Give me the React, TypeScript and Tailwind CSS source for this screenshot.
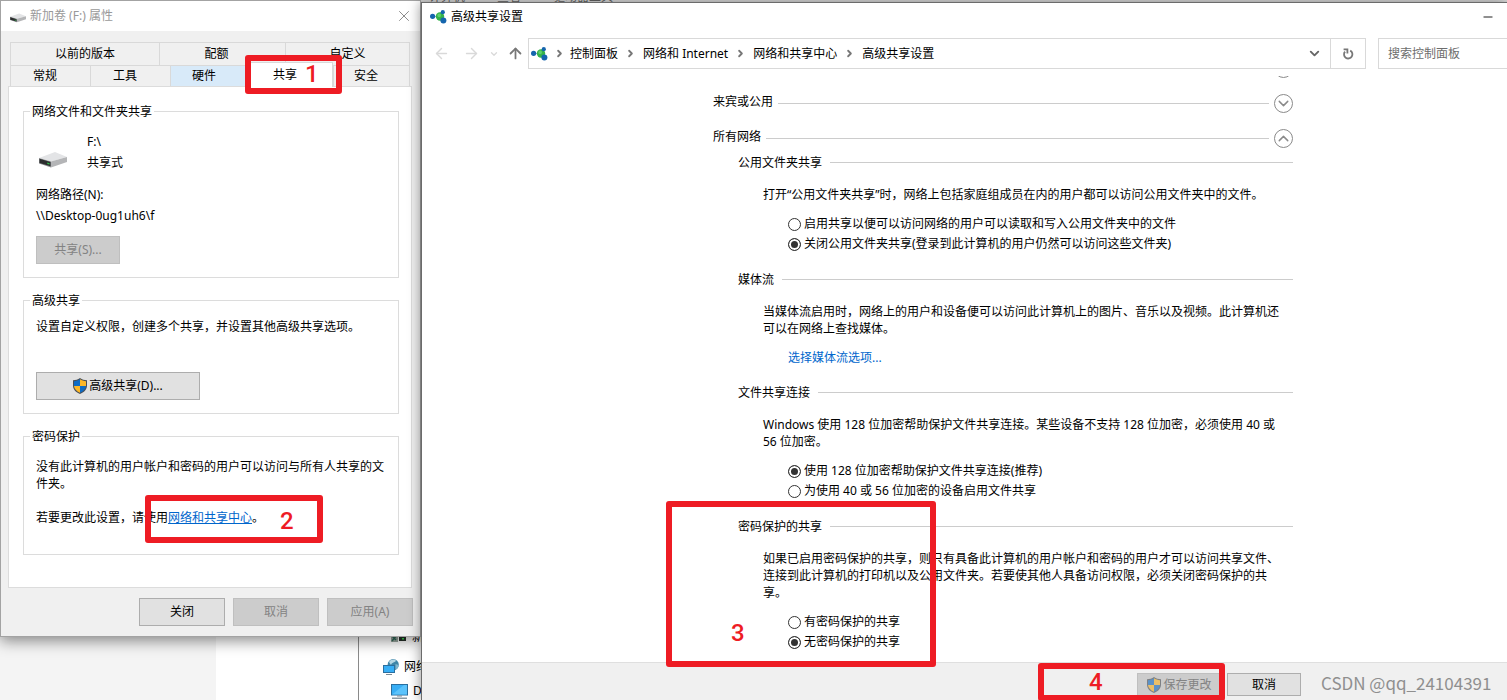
import React from 'react';
import { ArrowLeft, ArrowRight, ArrowUp, ChevronDown, ChevronRight, ChevronUp, Minus, X } from 'lucide-react';

const DriveIcon = ({ className }: { className: string }) => (
  <svg viewBox="0 0 28 16" className={className} aria-hidden="true">
    <path d="M0 6 L16 0 L28 5 L12 9.5 Z" fill="#e3e4e6" />
    <path d="M12 9.5 L28 5 V10 L12 15.5 Z" fill="#b4b5b7" />
    <path d="M0 6 L12 9.5 V15.5 L0 11.5 Z" fill="#8d8f91" />
    <path d="M0.5 6.8 L11.5 10 V14.2 L0.5 11 Z" fill="#2b2d2e" />
    <path d="M8.3 10.6 L10.6 11.3 V12.6 L8.3 12 Z" fill="#2fc24a" />
  </svg>
);

const ShieldIcon = ({ className }: { className: string }) => (
  <svg viewBox="0 0 14 16" className={className} aria-hidden="true">
    <path d="M7 0 C5 1.6 2.6 2.2 0 2.2 V7.5 C0 11.6 3 14.4 7 16 C11 14.4 14 11.6 14 7.5 V2.2 C11.4 2.2 9 1.6 7 0 Z" fill="#4a4f57" />
    <path d="M7 1.3 V8 H1 V3.2 C3.3 3.1 5.3 2.5 7 1.3 Z" fill="#0f6cc4" />
    <path d="M7 1.3 V8 H13 V3.2 C10.7 3.1 8.7 2.5 7 1.3 Z" fill="#fdb827" />
    <path d="M7 8 V14.8 C3.9 13.5 1.3 11.2 1 8 Z" fill="#fdb827" />
    <path d="M7 8 V14.8 C10.1 13.5 12.7 11.2 13 8 Z" fill="#0f6cc4" />
  </svg>
);

const SharingIcon = () => (
  <svg viewBox="0 0 17 14" className="h-3.5 w-[17px] shrink-0" aria-hidden="true">
    <path d="M2.5 6.5 H10 L13 2.5 M10 6.5 L13.5 10.5" stroke="#9cc3e0" strokeWidth="1" fill="none" />
    <circle cx="10" cy="6.5" r="4.2" fill="#34b24a" />
    <circle cx="9.2" cy="5.4" r="1.8" fill="#5fd06d" />
    <circle cx="2.6" cy="6.3" r="2.6" fill="#1565ad" />
    <circle cx="12.8" cy="2.2" r="2.1" fill="#1565ad" />
    <circle cx="13.4" cy="10.4" r="3" fill="#1565ad" />
  </svg>
);

const RefreshIcon = () => (
  <svg viewBox="0 0 12 12" className="size-3" fill="none" stroke="currentColor" strokeWidth="1.8" aria-hidden="true">
    <path d="M8.2 2.6 A4.2 4.2 0 1 1 3 3.6" />
    <path d="M1.6 1.4 H5.4 V5.4" />
  </svg>
);

const MonitorIcon = () => (
  <svg viewBox="0 0 17 15" className="h-[15px] w-[17px] shrink-0" aria-hidden="true">
    <rect x="0.5" y="0.5" width="16" height="10.5" fill="#38aef5" stroke="#2b6f9f" />
    <path d="M1 10.5 L13 1 H16 V10.5 Z" fill="#5cc3fb" />
    <rect x="6" y="11.5" width="5" height="1" fill="#7b8a94" />
    <rect x="1" y="13.5" width="15" height="1.5" fill="#8a9aa5" />
  </svg>
);

const NetworkIcon = () => (
  <svg viewBox="0 0 16 17" className="h-[17px] w-4 shrink-0" aria-hidden="true">
    <circle cx="10.2" cy="5.7" r="5.6" fill="#3f86a8" />
    <path d="M6 3 C8 0 12 0 13 2 C11 4 9 3 8 6 Z" fill="#b7d7e4" />
    <path d="M12.5 5 L15.6 6 C15.5 8.5 14 10 12.5 10.6 Z" fill="#82b6cd" />
    <rect x="0.5" y="6.5" width="11" height="7" fill="#38aef5" stroke="#2b6f9f" />
    <rect x="3" y="15" width="6" height="1" fill="#7b8a94" />
  </svg>
);

const DiskStatusIcon = () => (
  <svg viewBox="0 0 15 10" className="h-2.5 w-[15px] shrink-0" aria-hidden="true">
    <rect width="7" height="10" fill="#9aa7a0" />
    <path d="M1 9 L6 3 M1 4 L5 8" stroke="#2f6b5a" strokeWidth="1.4" />
    <rect x="8" y="4" width="7" height="5" fill="#26302a" />
    <rect x="11" y="6" width="2" height="1.5" fill="#37e04c" />
  </svg>
);

interface CalloutProps {
  value: string;
  box: string;
  number: string;
}

const Callout = ({ value, box, number }: CalloutProps) => (
  <div className={`pointer-events-none absolute z-20 rounded-[3px] border-[6px] border-[#ee1c24] ${box}`}>
    <span className={`absolute font-['Roboto',sans-serif] text-2xl leading-6 font-medium text-[#ee1c24] ${number}`}>{value}</span>
  </div>
);

const DialogButton = ({ children, disabled, className }: { children: React.ReactNode; disabled?: boolean; className: string }) => (
  <button
    type="button"
    disabled={disabled}
    className={`flex items-center justify-center border ${disabled ? 'border-[#bfbfbf] bg-[#cccccc] text-[#838383]' : 'border-[#adadad] bg-[#e1e1e1] text-black'} ${className}`}
  >
    {children}
  </button>
);

const topTabs = [
  { label: '以前的版本', width: 'w-[149px]' },
  { label: '配额', width: 'w-[126px] pr-3' },
  { label: '自定义', width: 'flex-1' },
];

const bottomTabs = [
  { label: '常规', style: 'w-20 border-t' },
  { label: '工具', style: 'w-20 border-t' },
  { label: '硬件', style: 'w-[78px] border-t bg-[#d8eaf9]' },
  { label: '共享', style: 'relative z-10 -mt-[3px] -mb-px w-[85px] border-t border-r bg-white' },
  { label: '安全', style: 'flex-1 border-t border-r' },
];

const Group = ({ title, className, children }: { title: string; className: string; children: React.ReactNode }) => (
  <fieldset className={`border border-[#dcdcdc] px-3 ${className}`}>
    <legend className="-ml-1.5 h-4 px-0.5 leading-[18px]">{title}</legend>
    {children}
  </fieldset>
);

const PropertiesDialog = () => (
  <section className="absolute top-0 left-0 w-[421px] border border-[#a3a3a3] bg-[#f0f0f0] shadow-[0_4px_14px_rgba(0,0,0,0.45)]">
    <header className="flex h-[30px] items-center bg-white pr-[7px] pl-[9px] text-[#999]">
      <DriveIcon className="mt-1 h-2.5 w-4" />
      <h1 className="ml-1">新加卷 (F:) 属性</h1>
      <button type="button" aria-label="关闭窗口" className="ml-auto">
        <X size={18} strokeWidth={1} className="text-[#666]" />
      </button>
    </header>

    <div role="tablist" className="mt-[11px] mr-[10px] ml-[9px]">
      <div className="flex h-[23px]">
        {topTabs.map((tab) => (
          <button key={tab.label} role="tab" type="button" className={`border-t border-l border-[#d9d9d9] last:border-r ${tab.width}`}>
            {tab.label}
          </button>
        ))}
      </div>
      <div className="flex h-[21px]">
        {bottomTabs.map((tab) => (
          <button key={tab.label} role="tab" type="button" aria-selected={tab.label === '共享'} className={`border-l border-[#d9d9d9] pr-[11px] ${tab.style}`}>
            {tab.label}
          </button>
        ))}
      </div>
    </div>

    <div className="mr-2 ml-[7px] flex flex-col gap-3.5 border border-[#dcdcdc] bg-white pt-4 pr-3 pb-8 pl-3.5">
      <Group title="网络文件和文件夹共享" className="pb-[13px]">
        <div className="flex items-center pt-3 leading-[21px]">
          <DriveIcon className="mt-4 ml-[3px] h-4 w-7" />
          <div className="ml-5">
            <p>F:\</p>
            <p>共享式</p>
          </div>
        </div>
        <p className="mt-[11px] leading-[21px]">网络路径(N):</p>
        <p className="leading-[21px]">\\Desktop-0ug1uh6\f</p>
        <DialogButton disabled className="mt-2.5 h-7 w-[84px]">共享(S)...</DialogButton>
      </Group>

      <Group title="高级共享" className="pb-[13px]">
        <p className="pt-2.5 leading-[17px]">设置自定义权限，创建多个共享，并设置其他高级共享选项。</p>
        <DialogButton className="mt-[37px] h-7 w-[164px] gap-0.5">
          <ShieldIcon className="h-4 w-3.5" />
          高级共享(D)...
        </DialogButton>
      </Group>

      <Group title="密码保护" className="pb-7">
        <p className="pt-3.5 leading-[17px]">没有此计算机的用户帐户和密码的用户可以访问与所有人共享的文件夹。</p>
        <p className="mt-[17px] leading-[17px]">
          若要更改此设置，请使用
          <a href="#network-center" className="text-[#0066cc] underline">网络和共享中心</a>。
        </p>
      </Group>
    </div>

    <footer className="flex justify-end gap-2 py-2.5 pr-[7px]">
      <DialogButton className="h-7 w-[86px]">关闭</DialogButton>
      <DialogButton disabled className="h-7 w-[86px]">取消</DialogButton>
      <DialogButton disabled className="h-7 w-[86px]">应用(A)</DialogButton>
    </footer>

    <Callout value="1" box="left-[244px] top-[54px] h-[39px] w-[97px]" number="left-[54px] top-px" />
    <Callout value="2" box="left-[144px] top-[494px] h-[48px] w-[178px]" number="left-[129px] top-2" />
  </section>
);

const crumbs = ['控制面板', '网络和 Internet', '网络和共享中心', '高级共享设置'];

const ProfileRow = ({ title, open }: { title?: string; open?: boolean }) => (
  <div className="flex h-[19px] items-center gap-[5px]">
    {title && <h2 className="self-start leading-4">{title}</h2>}
    <div className="h-px flex-1 bg-[#cccccc]" />
    <button type="button" aria-label={open ? '收起' : '展开'} aria-expanded={!!open} className="flex size-[19px] items-center justify-center rounded-full border border-[#8a8a8a] text-[#8a8a8a]">
      {open ? <ChevronUp size={17} strokeWidth={2} className="shrink-0" /> : <ChevronDown size={17} strokeWidth={2} className="shrink-0" />}
    </button>
  </div>
);

const Section = ({ title, text, children }: { title: string; text: string; children: React.ReactNode }) => (
  <section className="pl-[25px] leading-[17px]">
    <div className="flex items-center gap-2">
      <h3>{title}</h3>
      <div className="h-px flex-1 bg-[#cccccc]" />
    </div>
    <p className="mt-[15px] pr-1 pl-[25px]">{text}</p>
    <div className="mt-[11px] pl-[50px]">{children}</div>
  </section>
);

const RadioGroup = ({ name, options, selected }: { name: string; options: string[]; selected: number }) => (
  <div role="radiogroup">
    {options.map((option, i) => (
      <label key={option} className="flex h-5 items-center gap-[3px]">
        <input
          type="radio"
          name={name}
          defaultChecked={i === selected}
          className="size-[13px] appearance-none rounded-full border border-[#333] bg-white checked:bg-[#333] checked:shadow-[inset_0_0_0_2px_#fff]"
        />
        <span className="pb-0.5">{option}</span>
      </label>
    ))}
  </div>
);

const SharingSettings = () => (
  <section className="absolute top-0.5 right-0 bottom-0 left-[421px] flex flex-col border-t border-l border-[#6b6b6b] bg-white shadow-[0_0_12px_rgba(0,0,0,0.45)]">
    <header className="flex h-7 shrink-0 items-center pr-3 pl-2">
      <SharingIcon />
      <h1 className="ml-1">高级共享设置</h1>
      <button type="button" aria-label="最小化" className="ml-auto">
        <Minus size={14} strokeWidth={1.5} />
      </button>
    </header>

    <nav className="mt-[7px] flex h-[31px] shrink-0 items-stretch pl-1">
      <button type="button" aria-label="后退" className="flex w-[30px] items-center justify-center text-[#d9d9d9]">
        <ArrowLeft size={17} strokeWidth={2} />
      </button>
      <button type="button" aria-label="前进" className="flex w-[30px] items-center justify-center text-[#d9d9d9]">
        <ArrowRight size={17} strokeWidth={2} />
      </button>
      <button type="button" aria-label="最近的位置" className="flex w-4 items-center justify-center text-[#d9d9d9]">
        <ChevronDown size={10} strokeWidth={3} />
      </button>
      <button type="button" aria-label="上移" className="flex w-[26px] items-center justify-center text-[#777]">
        <ArrowUp size={17} strokeWidth={2.5} />
      </button>
      <div className="flex flex-1 items-center border border-[#d9d9d9] pl-0.5">
        <SharingIcon />
        {crumbs.map((crumb) => (
          <React.Fragment key={crumb}>
            <span className="flex w-[25px] shrink-0 justify-center first-of-type:w-[22px]">
              <ChevronRight size={11} strokeWidth={4} className="text-[#777]" />
            </span>
            <a href="#crumb" className="whitespace-nowrap">{crumb}</a>
          </React.Fragment>
        ))}
        <button type="button" aria-label="以前的位置" className="ml-auto flex w-8 justify-center text-[#666]">
          <ChevronDown size={15} strokeWidth={3} />
        </button>
        <button type="button" aria-label="刷新" className="flex w-[35px] items-center justify-center self-stretch border-l border-[#d9d9d9] text-[#777]">
          <RefreshIcon />
        </button>
      </div>
      <input
        type="search"
        aria-label="搜索控制面板"
        placeholder="搜索控制面板"
        className="ml-3 w-[129px] border border-r-0 border-[#d9d9d9] pl-[9px] placeholder:text-[#6d6d6d]"
      />
    </nav>

    <main className="mt-[7px] min-h-0 flex-1 overflow-hidden">
      <div className="-mt-[17px] ml-[291px] w-[580px]">
        <div className="flex flex-col gap-4">
          <ProfileRow />
          <ProfileRow title="来宾或公用" />
          <ProfileRow title="所有网络" open />
        </div>
        <div className="mt-1.5 flex flex-col gap-[17px]">
          <Section title="公用文件夹共享" text="打开“公用文件夹共享”时，网络上包括家庭组成员在内的用户都可以访问公用文件夹中的文件。">
            <RadioGroup
              name="public-folder"
              selected={1}
              options={['启用共享以便可以访问网络的用户可以读取和写入公用文件夹中的文件', '关闭公用文件夹共享(登录到此计算机的用户仍然可以访问这些文件夹)']}
            />
          </Section>
          <Section title="媒体流" text="当媒体流启用时，网络上的用户和设备便可以访问此计算机上的图片、音乐以及视频。此计算机还可以在网络上查找媒体。">
            <a href="#media" className="block leading-[19px] text-[#0066cc]">选择媒体流选项...</a>
          </Section>
          <Section title="文件共享连接" text="Windows 使用 128 位加密帮助保护文件共享连接。某些设备不支持 128 位加密，必须使用 40 或 56 位加密。">
            <RadioGroup name="encryption" selected={0} options={['使用 128 位加密帮助保护文件共享连接(推荐)', '为使用 40 或 56 位加密的设备启用文件共享']} />
          </Section>
          <Section title="密码保护的共享" text="如果已启用密码保护的共享，则只有具备此计算机的用户帐户和密码的用户才可以访问共享文件、连接到此计算机的打印机以及公用文件夹。若要使其他人具备访问权限，必须关闭密码保护的共享。">
            <RadioGroup name="password" selected={1} options={['有密码保护的共享', '无密码保护的共享']} />
          </Section>
        </div>
      </div>
    </main>

    <footer className="relative flex h-[38px] shrink-0 items-start justify-end border-t border-[#dfdfdf] bg-[#f0f0f0] pt-2.5 pr-[15px]">
      <DialogButton disabled className="h-[23px] w-[85px] gap-0.5">
        <ShieldIcon className="h-4 w-3.5 opacity-60" />
        保存更改
      </DialogButton>
      <DialogButton className="ml-[5px] h-[23px] w-[74px]">取消</DialogButton>
      <span className="ml-5 w-[171px] font-['Noto_Sans_CJK_SC',sans-serif] text-[17px] leading-5 whitespace-nowrap text-[#8f8f8f]">CSDN @qq_24104391</span>
      <Callout value="4" box="right-[282px] top-0 h-[38px] w-[187px]" number="left-[45px] top-px" />
    </footer>

    <Callout value="3" box="left-[244px] top-[498px] h-[166px] w-[270px]" number="left-[59px] top-[114px]" />
  </section>
);

const Explorer = () => (
  <section className="absolute inset-y-0 right-0 left-[358px] border-l border-[#8a8a8a] bg-white">
    <div className="flex h-[3px] items-end overflow-hidden bg-[#e0e0e0] pl-[70px] text-[#666]">
      <span className="leading-3">计算机</span>
      <span className="ml-8 leading-3">查看</span>
      <span className="ml-8 leading-3">驱动器工具</span>
    </div>
    <ul className="pt-[622px] pl-6">
      <li className="mb-1.5 flex h-6 items-center gap-1.5 pl-2">
        <DiskStatusIcon />
        <span className="whitespace-nowrap">新加卷</span>
      </li>
      <li className="flex h-6 items-center gap-[5px]">
        <NetworkIcon />
        <span className="whitespace-nowrap">网络</span>
      </li>
      <li className="flex h-6 items-center gap-[5px] pl-2">
        <MonitorIcon />
        <span className="whitespace-nowrap">DESKTOP</span>
      </li>
    </ul>
  </section>
);

const App: React.FC = () => {
  return (
    <div className="relative h-screen overflow-hidden bg-white font-['Noto_Sans','Noto_Sans_CJK_SC',sans-serif] text-xs text-black">
      <div className="h-full w-[216px] bg-[#f4f4f4]" />
      <Explorer />
      <PropertiesDialog />
      <SharingSettings />
    </div>
  );
};

export default App;
